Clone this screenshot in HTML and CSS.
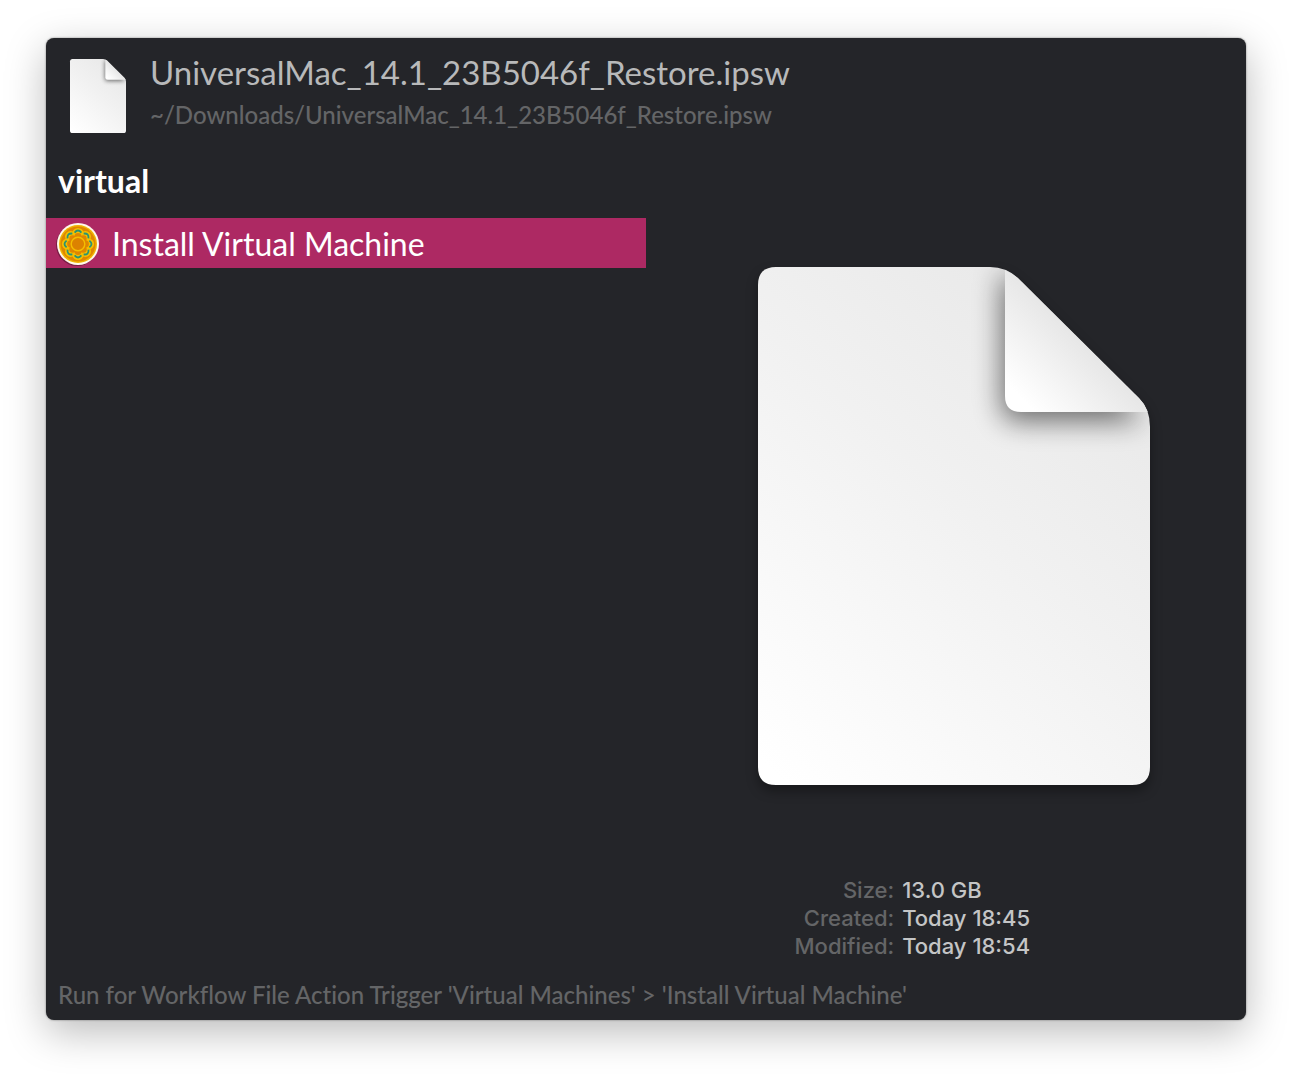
FILE: index.html
```html
<!DOCTYPE html>
<html lang="en">
<head>
<meta charset="utf-8">
<meta name="viewport" content="width=device-width, initial-scale=1">
<title>Install Virtual Machine</title>
<link rel="stylesheet" href="styles.css">
</head>
<body>
<main class="panel">
  <header class="file">
    <svg class="file-icon" viewBox="0 0 392 518" aria-hidden="true"><use href="#document"/></svg>
    <div class="file-text">
      <h1 class="file-name">UniversalMac_14.1_23B5046f_Restore.ipsw</h1>
      <p class="file-path">~/Downloads/UniversalMac_14.1_23B5046f_Restore.ipsw</p>
    </div>
  </header>

  <input class="query" type="text" value="virtual" aria-label="Filter actions">

  <div class="content">
    <ul class="results">
      <li>
        <button class="result" type="button">
          <svg class="result-icon" viewBox="0 0 44 44" aria-hidden="true">
            <circle cx="21" cy="23" r="21" fill="#000" opacity=".3"/>
            <circle cx="22" cy="22" r="21" fill="#fff8ea"/>
            <circle cx="22" cy="22" r="19" fill="#f0b400"/>
            <circle cx="22" cy="22" r="17.5" fill="#df8600"/>
            <g fill="#f4be00">
              <circle cx="22" cy="11.5" r="5.6"/><circle cx="29.4" cy="14.6" r="5.6"/>
              <circle cx="32.5" cy="22" r="5.6"/><circle cx="29.4" cy="29.4" r="5.6"/>
              <circle cx="22" cy="32.5" r="5.6"/><circle cx="14.6" cy="29.4" r="5.6"/>
              <circle cx="11.5" cy="22" r="5.6"/><circle cx="14.6" cy="14.6" r="5.6"/>
            </g>
            <g fill="none" stroke="#2a9474" stroke-width="1.8">
              <path id="petal" d="M18.6 10.6Q22 6.4 25.4 10.6"/>
              <use href="#petal" transform="rotate(45 22 22)"/>
              <use href="#petal" transform="rotate(90 22 22)"/>
              <use href="#petal" transform="rotate(135 22 22)"/>
              <use href="#petal" transform="rotate(180 22 22)"/>
              <use href="#petal" transform="rotate(225 22 22)"/>
              <use href="#petal" transform="rotate(270 22 22)"/>
              <use href="#petal" transform="rotate(315 22 22)"/>
            </g>
            <g fill="#df8600">
              <circle cx="22" cy="14.5" r="3.4"/><circle cx="27.3" cy="16.7" r="3.4"/>
              <circle cx="29.5" cy="22" r="3.4"/><circle cx="27.3" cy="27.3" r="3.4"/>
              <circle cx="22" cy="29.5" r="3.4"/><circle cx="16.7" cy="27.3" r="3.4"/>
              <circle cx="14.5" cy="22" r="3.4"/><circle cx="16.7" cy="16.7" r="3.4"/>
              <circle cx="22" cy="22" r="9"/>
            </g>
            <circle cx="22" cy="22" r="6.8" fill="#dc8200" stroke="#f4be00" stroke-width="1.4"/>
          </svg>
          <span class="result-title">Install Virtual Machine</span>
        </button>
      </li>
    </ul>

    <section class="preview">
      <svg class="preview-icon" viewBox="0 0 392 518" aria-hidden="true">
        <defs>
          <linearGradient id="paper" x1="30" y1="518" x2="392" y2="120" gradientUnits="userSpaceOnUse">
            <stop offset="0" stop-color="#fff"/>
            <stop offset=".6" stop-color="#f1f1f1"/>
            <stop offset="1" stop-color="#e9e9e9"/>
          </linearGradient>
          <linearGradient id="flap" x1="262" y1="130" x2="322" y2="70" gradientUnits="userSpaceOnUse">
            <stop offset="0" stop-color="#fff"/>
            <stop offset="1" stop-color="#e6e6e6"/>
          </linearGradient>
          <filter id="soft" x="-50%" y="-50%" width="200%" height="200%">
            <feGaussianBlur stdDeviation="14"/>
          </filter>
          <clipPath id="sheet"><path d="M18 0H232Q248 0 260 11L381 131Q392 142 392 160V500Q392 518 374 518H18Q0 518 0 500V18Q0 0 18 0Z"/></clipPath>
          <g id="document">
            <path d="M18 0H232Q248 0 260 11L381 131Q392 142 392 160V500Q392 518 374 518H18Q0 518 0 500V18Q0 0 18 0Z" fill="url(#paper)"/>
            <g clip-path="url(#sheet)">
              <path d="M244 5V138Q244 154 260 154H385L270 20Z" fill="#000" opacity=".55" filter="url(#soft)"/>
              <path d="M247 3Q254 6 260 11L381 131Q388 138 390 145H263Q247 145 247 129Z" fill="url(#flap)"/>
            </g>
          </g>
        </defs>
        <use href="#document"/>
      </svg>
      <dl class="details">
        <dt>Size:</dt><dd>13.0 GB</dd>
        <dt>Created:</dt><dd>Today 18:45</dd>
        <dt>Modified:</dt><dd>Today 18:54</dd>
      </dl>
    </section>
  </div>

  <footer class="hint">Run for Workflow File Action Trigger 'Virtual Machines' &gt; 'Install Virtual Machine'</footer>
</main>
</body>
</html>
```

FILE: styles.css
```css
* {
  box-sizing: border-box;
  margin: 0;
  padding: 0;
}

body {
  display: flex;
  min-height: 100vh;
  padding: 38px 46px 54px;
  background: #fff;
  font-family: Lato, "Open Sans", sans-serif;
  font-variant-ligatures: none;
  color: #fff;
}

.panel {
  flex: 1;
  min-width: 0;
  display: flex;
  flex-direction: column;
  background: #242529;
  border-radius: 8px;
  box-shadow: 0 0 2px rgba(0, 0, 0, 0.5), 0 12px 40px rgba(0, 0, 0, 0.27);
}

.file {
  display: flex;
  gap: 24px;
  padding: 14px 24px 0;
  height: 112px;
}

.file-icon {
  width: 56px;
  height: 74px;
  margin-top: 7px;
  flex: none;
  overflow: visible;
}

.file-name {
  font-size: 33px;
  line-height: 40px;
  font-weight: 400;
  color: #b8b9ba;
}

.file-path {
  margin-top: 3px;
  font-size: 24px;
  line-height: 40px;
  font-weight: 500;
  color: #646567;
}

.query {
  width: 100%;
  height: 68px;
  padding: 0 12px 8px;
  border: 0;
  outline: 0;
  background: transparent;
  color: #fff;
  font: 700 32px/40px Lato, "Open Sans", sans-serif;
}

.content {
  flex: 1;
  display: grid;
  grid-template-columns: 1fr 1fr;
}

.results {
  list-style: none;
}

.result {
  display: flex;
  align-items: center;
  gap: 12px;
  width: 100%;
  height: 50px;
  padding: 2px 10px 0;
  border: 0;
  background: #ad2963;
  color: #fff;
  font: 400 32px/40px Lato, "Open Sans", sans-serif;
  text-align: left;
}

.result-icon {
  width: 44px;
  height: 44px;
  flex: none;
}

.preview {
  display: flex;
  flex-direction: column;
  align-items: center;
  padding: 49px 0 0 16px;
}

.preview-icon {
  width: 392px;
  max-width: 80%;
  overflow: visible;
  filter: drop-shadow(0 6px 6px rgba(0, 0, 0, 0.35));
}

.details {
  display: grid;
  grid-template-columns: 2fr 3fr;
  column-gap: 8px;
  width: 100%;
  padding-left: 3px;
  margin-top: 91px;
  font: 500 22px/28px Inter, "Liberation Sans", sans-serif;
}

.details dt {
  text-align: right;
  color: #646567;
}

.details dd {
  color: #c4c5c6;
}

.hint {
  padding: 0 12px 9px;
  font-size: 24px;
  line-height: 32px;
  font-weight: 500;
  color: #646567;
}
```
